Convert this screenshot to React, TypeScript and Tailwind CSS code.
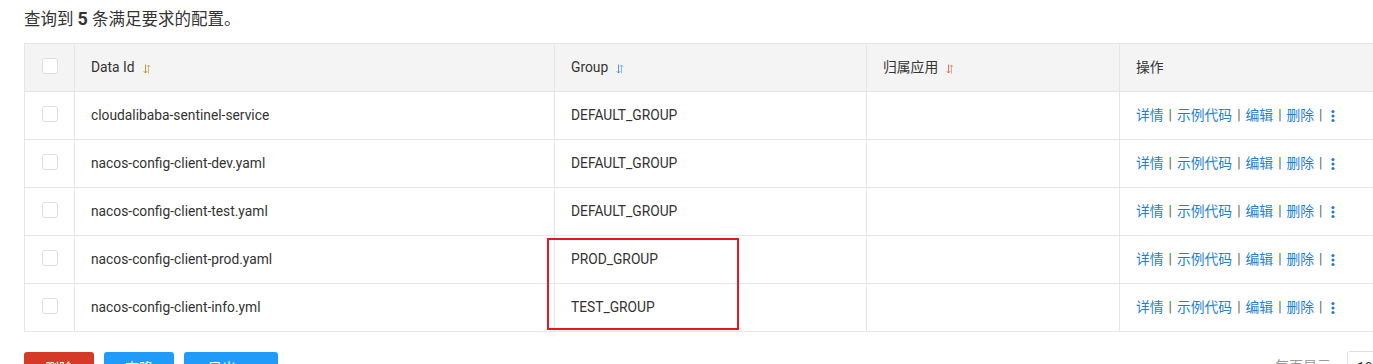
import React from 'react';

type Row = { id: string; group: string };

const rows: Row[] = [
  { id: 'cloudalibaba-sentinel-service', group: 'DEFAULT_GROUP' },
  { id: 'nacos-config-client-dev.yaml', group: 'DEFAULT_GROUP' },
  { id: 'nacos-config-client-test.yaml', group: 'DEFAULT_GROUP' },
  { id: 'nacos-config-client-prod.yaml', group: 'PROD_GROUP' },
  { id: 'nacos-config-client-info.yml', group: 'TEST_GROUP' },
];

// tiny double arrow used for sortable headers
const SortIcon = ({ color }: { color: string }) => (
  <svg width="8" height="10" viewBox="0 0 8 10" className="ml-2 inline-block">
    <path d="M2.5 0.5 V9 M0.8 7.2 L2.5 9 L4.2 7.2" stroke={color} strokeWidth="1" fill="none" opacity="0.85" />
    <path d="M5.5 9.5 V1 M3.8 2.8 L5.5 1 L7.2 2.8" stroke={color} strokeWidth="1" fill="none" opacity="0.55" />
  </svg>
);

const Checkbox = () => (
  <div className="w-4 h-4 rounded-[3px] border border-[#dcdee3] bg-white" />
);

const Sep = () => <span className="mx-[5px] text-[#666]">|</span>;

export default function App() {
  return (
    <div
      className="w-[1373px] h-[364px] overflow-hidden bg-white text-[#333] text-[13.8px]"
      style={{ fontFamily: 'Roboto, "Noto Sans CJK SC", sans-serif' }}
    >
      <div className="pl-6 pt-[8px] h-[43px] text-[16.5px] leading-[22px]">
        查询到 <b className="font-bold text-[18px]">5</b> 条满足要求的配置。
      </div>

      <div className="ml-6 w-[1400px]">
        <table className="border-collapse w-full table-fixed">
          <colgroup>
            <col className="w-[50px]" />
            <col className="w-[480px]" />
            <col className="w-[312px]" />
            <col className="w-[253px]" />
            <col />
          </colgroup>
          <thead>
            <tr className="h-12 bg-[#f4f4f4]">
              <th className="border border-[#e6e6e6] font-normal">
                <div className="flex justify-center -mt-[4px]">
                  <Checkbox />
                </div>
              </th>
              <th className="border border-[#e6e6e6] font-normal text-left pl-4">
                Data Id<SortIcon color="#b8860b" />
              </th>
              <th className="border border-[#e6e6e6] font-normal text-left pl-4">
                Group<SortIcon color="#2a8ef5" />
              </th>
              <th className="border border-[#e6e6e6] font-normal text-left pl-4">
                归属应用<SortIcon color="#e0584a" />
              </th>
              <th className="border border-[#e6e6e6] border-r-0 font-normal text-left pl-4">操作</th>
            </tr>
          </thead>
          <tbody>
            {rows.map((r) => (
              <tr key={r.id} className="h-12">
                <td className="border border-[#e6e6e6]">
                  <div className="flex justify-center -mt-[4px]">
                    <Checkbox />
                  </div>
                </td>
                <td className="border border-[#e6e6e6] pl-4">{r.id}</td>
                <td className="border border-[#e6e6e6] pl-4">{r.group}</td>
                <td className="border border-[#e6e6e6]" />
                <td className="border border-[#e6e6e6] pl-4 text-[#1f7fd6]">
                  <div className="flex items-center">
                    <span>详情</span>
                    <Sep />
                    <span>示例代码</span>
                    <Sep />
                    <span>编辑</span>
                    <Sep />
                    <span>删除</span>
                    <Sep />
                    <svg width="4" height="14" viewBox="0 0 4 14" className="ml-[4px]">
                      <circle cx="2" cy="2.5" r="1.6" fill="#1f7fd6" />
                      <circle cx="2" cy="7" r="1.6" fill="#1f7fd6" />
                      <circle cx="2" cy="11.5" r="1.6" fill="#1f7fd6" />
                    </svg>
                  </div>
                </td>
              </tr>
            ))}
          </tbody>
        </table>
      </div>

      <div className="relative">
        <div className="absolute left-[547px] -top-[94px] w-[192px] h-[92px] border-2 border-[#e8141e]" />
      </div>

      <div className="flex items-start justify-between pl-6 pt-5 w-[1424px]">
        <div className="flex gap-[10px] text-white text-[14px]">
          <button className="h-8 w-[70px] rounded-[3px] bg-[#d43a26]">删除</button>
          <button className="h-8 w-[70px] rounded-[3px] bg-[#209bfa]">克隆</button>
          <button className="h-8 w-[94px] rounded-[3px] bg-[#209bfa] flex items-center justify-center gap-2">
            导出
            <svg width="10" height="6" viewBox="0 0 10 6">
              <path d="M1 1 L5 5 L9 1" stroke="white" strokeWidth="1.5" fill="none" />
            </svg>
          </button>
        </div>
        <div className="flex items-start gap-4 mt-[4px]">
          <span className="text-[#999] text-[14px] leading-5">每页显示</span>
          <div className="h-8 w-[77px] border border-[#dcdee3] rounded-[3px] px-[9px] pt-[6px] -mt-[5px] text-[14px]">10</div>
        </div>
      </div>
    </div>
  );
}
